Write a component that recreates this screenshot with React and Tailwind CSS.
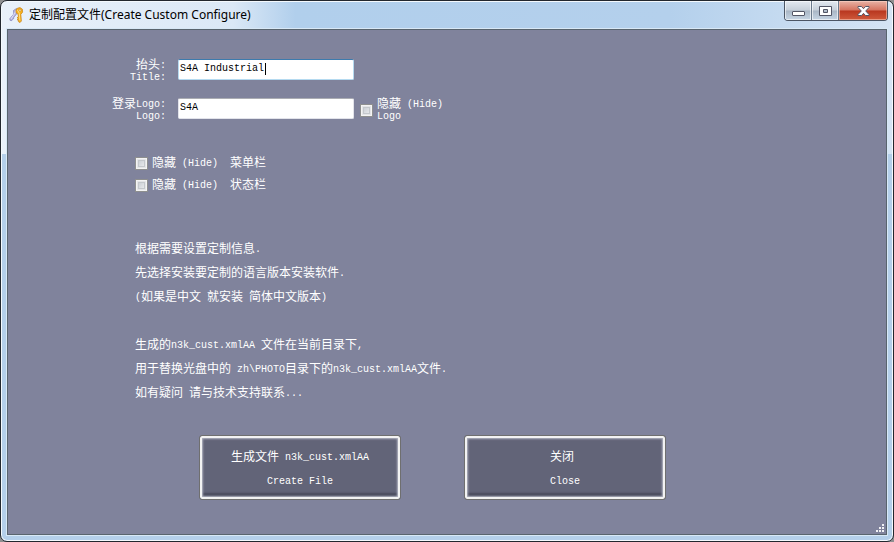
import { Fragment, useState } from 'react';

// Latin runs are set smaller than the Chinese so that two of them fill one character cell
function Mixed({ children }) {
  const parts = children.split(/([\x20-\x7e\u00a0]+)/);
  return parts.map((part, i) =>
    i % 2 ? (
      <span key={i} className="align-[1px] text-[10px] leading-none">{part}</span>
    ) : (
      <Fragment key={i}>{part}</Fragment>
    )
  );
}

function KeysIcon() {
  return (
    <svg width="16" height="16" viewBox="0 0 16 16" aria-hidden="true">
      <path d="M7.500 1.500 4.500 3.500 4.800 7 .8 11.800l.4 1.600 1.600.2.600-1.400 1.200-.4.200-1.600L8 6.500z" fill="#b9b9e2" stroke="#7c7cb4" strokeWidth="0.7" />
      <path d="M7.200 3.500 5.900 5.800 2 12" stroke="#e8e8fa" strokeWidth="0.8" fill="none" />
      <path d="M8.400 1.200 11 .6l2.400 1.600.2 3-1.800 2.200.6 6.600-1.400 1.600-1.600-1 .2-1.400-1.600-.4 1.400-1.200-1.400-.8 1.400-1.200L9.200 7.600 7 5.600V3z" fill="#f5b21e" stroke="#c97f16" strokeWidth="0.7" />
      <path d="M8.400 2.800 10.400 6.500l.4 7" stroke="#ffe28a" strokeWidth="0.9" fill="none" />
      <circle cx="11" cy="3.200" r="1" fill="#fff" stroke="#b87312" strokeWidth="0.5" />
    </svg>
  );
}

function CaptionButtons() {
  const plain = 'flex w-[27px] items-center justify-center border-r border-[#6b7a8c] bg-[linear-gradient(to_bottom,#e3e9f0,#c6cfd9_48%,#a9b6c5_52%,#c6d5e4)] shadow-[inset_0_0_0_1px_rgba(255,255,255,0.6)]';
  return (
    <div className="flex h-5 w-[104px] overflow-hidden rounded-b-[4px] border border-t-0 border-[#4b5564]">
      <button type="button" aria-label="Minimize" className={plain}>
        <svg width="13" height="12" viewBox="0 0 13 12">
          <rect x="0.500" y="6.500" width="12" height="4" rx="0.500" fill="#fff" stroke="#535666" />
        </svg>
      </button>
      <button type="button" aria-label="Maximize" className={plain}>
        <svg width="13" height="12" viewBox="0 0 13 12">
          <path fillRule="evenodd" d="M.5 1.500h12v9H.5zM4.500 4.500v3h4v-3z" fill="#fff" stroke="#535666" />
        </svg>
      </button>
      <button type="button" aria-label="Close window" className="flex flex-1 items-center justify-center bg-[linear-gradient(to_bottom,#e8b3a6,#d5735f_48%,#b8361f_52%,#cf5a3c)] shadow-[inset_0_0_0_1px_rgba(255,220,205,0.5)]">
        <svg width="13" height="12" viewBox="0 0 13 12">
          <path d="M1 1.500h3.500l2 2.200 2-2.200H12v1L8.700 6l3.300 3.500v1H8.500l-2-2.200-2 2.200H1v-1L4.300 6 1 2.500z" fill="#fff" stroke="#535666" />
        </svg>
      </button>
    </div>
  );
}

function CheckBox(props) {
  return (
    <input
      type="checkbox"
      className="size-[13px] shrink-0 appearance-none border border-[#8e8f8f] bg-linear-to-br from-[#bfc4cb] to-[#f4f5f6] shadow-[inset_0_0_0_1px_#f4f4f4,inset_0_0_0_2px_#e4e5e7,inset_0_0_0_3px_#c4c8cc] checked:bg-[#4a5a8a]"
      {...props}
    />
  );
}

function HideOption({ id, label }) {
  return (
    <div className="flex h-[22px] items-center gap-1">
      <CheckBox id={id} />
      <label htmlFor={id} className="pt-0.5 leading-5"><Mixed>{label}</Mixed></label>
    </div>
  );
}

function Field({ id, top, bottom, value, onChange, focused, children }) {
  return (
    <div className="flex h-[39px] items-start">
      <label htmlFor={id} className="w-[166px] shrink-0 pt-px pr-2 text-right leading-3">
        <span className="block h-3"><Mixed>{top}</Mixed></span>
        <span className="block h-3"><Mixed>{bottom}</Mixed></span>
      </label>
      <div className="relative ml-1 w-44">
        <input
          id={id}
          type="text"
          value={value}
          onChange={(e) => onChange(e.target.value)}
          className={`block h-[21px] w-full rounded-[2px] border bg-white px-px pb-0.5 text-[10px] text-black outline-none ${focused ? 'border-[#b5daf0] border-t-[#3d7bad]' : 'border-[#e2e3ea] border-t-[#abadb3]'}`}
        />
        {focused && <span className="absolute top-1 left-[87px] h-3 w-px bg-black" />}
      </div>
      {children}
    </div>
  );
}

function BigButton({ top, bottom }) {
  return (
    <button
      type="button"
      className="h-[65px] w-[202px] rounded-[3px] border border-[#6f6f6f] bg-[#626478] pt-1 leading-6 shadow-[inset_0_0_0_2px_#f2f2f2,inset_0_0_2px_3px_#b4b6c4,inset_0_-6px_2px_0_#484a5c]"
    >
      <span className="block h-6"><Mixed>{top}</Mixed></span>
      <span className="block h-6"><Mixed>{bottom}</Mixed></span>
    </button>
  );
}

const notes = [
  '根据需要设置定制信息.',
  '先选择安装要定制的语言版本安装软件.',
  '(如果是中文 就安装 简体中文版本)',
  '\u00a0',
  '生成的n3k_cust.xmlAA 文件在当前目录下,',
  '用于替换光盘中的 zh\\PHOTO目录下的n3k_cust.xmlAA文件.',
  '如有疑问 请与技术支持联系...',
];

export default function App() {
  const [title, setTitle] = useState('S4A Industrial');
  const [logo, setLogo] = useState('S4A');

  return (
    <div className="flex min-h-screen bg-[#8f9091]">
      <div className="flex flex-1 flex-col rounded-[7px] border border-[#22272e] bg-[linear-gradient(to_bottom,transparent_153px,#b4cfea_153px),linear-gradient(to_right,#e9f1fa,#dbe8f6_26%,#b1cfec_33%,#b4d0ec_75%,#d5e4f4)] px-[5px] pb-[5px] shadow-[inset_0_0_0_1px_#f4f9fd]">
        <header className="flex h-[27px] items-start justify-between">
          <div className="flex items-center gap-1 pt-[5px] pl-[3px]">
            <KeysIcon />
            <h1 className="font-['Noto_Sans','Noto_Sans_CJK_SC',sans-serif] text-xs leading-[18px] text-black">定制配置文件(Create Custom Configure)</h1>
          </div>
          <CaptionButtons />
        </header>

        <main className="flex flex-1 flex-col border border-[#d8e8f6] bg-[#80839c] font-['Liberation_Mono','Noto_Sans_CJK_SC',monospace] text-xs text-white">
          <div className="relative flex-1 border border-[#59646e] pt-[29px]">
            <Field id="title" top="抬头:" bottom="Title:" value={title} onChange={setTitle} focused />
            <Field id="logo" top="登录Logo:" bottom="Logo:" value={logo} onChange={setLogo}>
              <div className="ml-1.5 flex items-center gap-1">
                <CheckBox id="hide-logo" />
                <label htmlFor="hide-logo" className="pt-px leading-3">
                  <span className="block h-3"><Mixed>{'隐藏 (Hide)'}</Mixed></span>
                  <span className="block h-3"><Mixed>Logo</Mixed></span>
                </label>
              </div>
            </Field>

            <div className="mt-[15px] pl-[127px]">
              <HideOption id="hide-menu" label={'隐藏 (Hide)\u00a0 菜单栏'} />
              <HideOption id="hide-status" label={'隐藏 (Hide)\u00a0 状态栏'} />
            </div>

            <div className="mt-[42px] pl-[127px]">
              {notes.map((line, i) => (
                <p key={i} className="h-6 leading-6"><Mixed>{line}</Mixed></p>
              ))}
            </div>

            <div className="mt-[29px] flex gap-[63px] pl-[191px]">
              <BigButton top="生成文件 n3k_cust.xmlAA" bottom="Create File" />
              <BigButton top={'关闭\u00a0'} bottom="Close" />
            </div>

            <svg className="absolute right-px bottom-px text-[#f1f1f4]" width="9" height="9" viewBox="0 0 9 9" fill="currentColor" aria-hidden="true">
              <path d="M6 0h2v2h-2zM3 3h2v2h-2zM6 3h2v2h-2zM0 6h2v2h-2zM3 6h2v2h-2zM6 6h2v2h-2z" />
            </svg>
          </div>
        </main>
      </div>
    </div>
  );
}
